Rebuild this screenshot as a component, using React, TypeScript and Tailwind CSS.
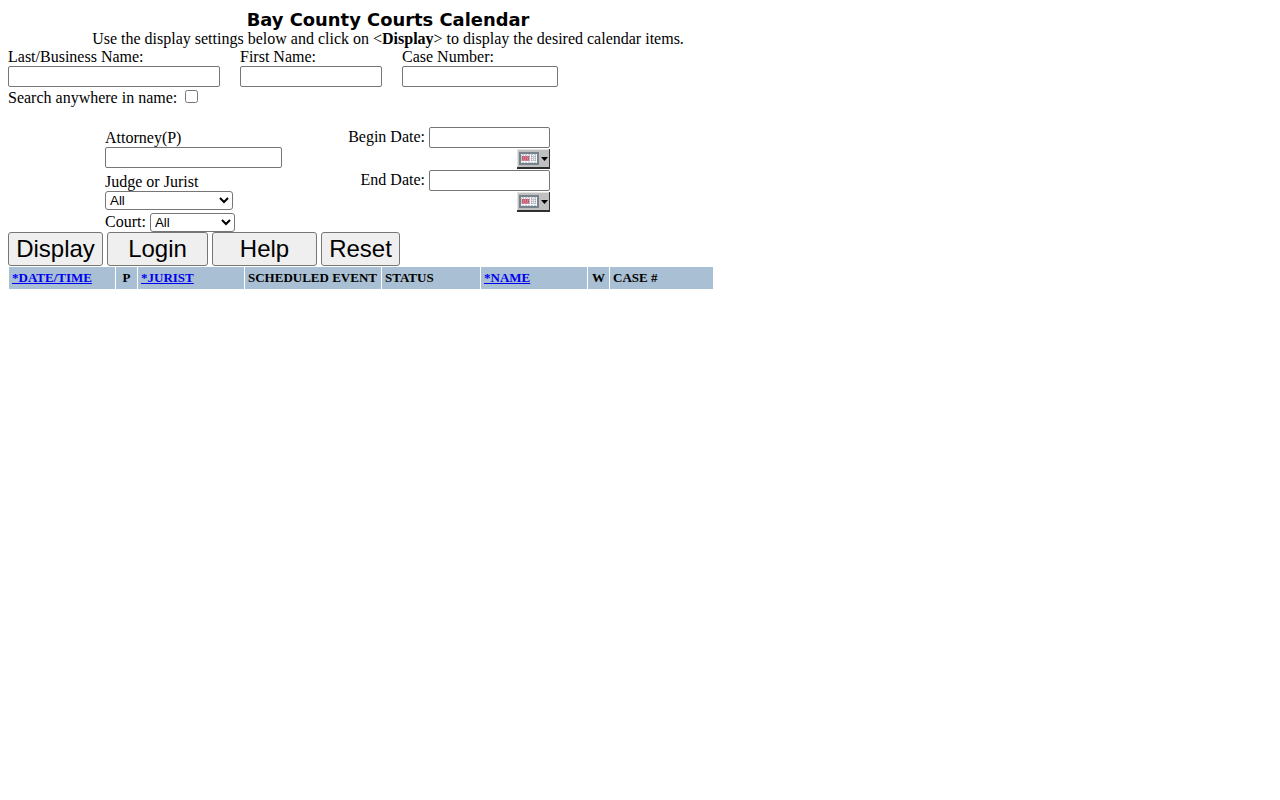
import React from 'react';

const serif = { fontFamily: '"Liberation Serif", serif' };

function CalendarButton() {
  return (
    <div className="ml-auto w-[33px] h-[20px]">
      <svg width="33" height="20" viewBox="0 0 33 20">
        <rect width="33" height="20" fill="#c0c0c0" />
        <path d="M0 0H33V1H1V20H0Z" fill="#e4e4e4" />
        <path d="M0 18H33V20H0ZM32 0H33V20H32Z" fill="#303030" />
        <rect x="2" y="3" width="20" height="13" fill="#77838a" />
        <rect x="4" y="5" width="16" height="9" fill="#f6f6f6" />
        <path d="M4 7H20M4 9H20M4 11H20M6 5V14M9 5V14M12 5V14M15 5V14M18 5V14" stroke="#8f98a8" strokeWidth="1" strokeDasharray="1 1" />
        <rect x="5" y="7" width="7" height="5" fill="#d9486a" opacity="0.55" />
        <path d="M5 8H12M5 10H12" stroke="#c0203c" strokeWidth="1" strokeDasharray="1 1" />
        <path d="M24 11H31L27.5 15Z" fill="#000000" transform="translate(0 -3)" />
      </svg>
    </div>
  );
}

const textInput = 'block h-[21px] border border-[#767676] rounded-[2px] bg-white';
const bigButton = 'h-[34px] border border-[#767676] rounded-[3px] bg-[#efefef] text-[24px] text-black text-center leading-none';
const smallSelect = 'h-[19px] border border-[#767676] rounded-[3px] bg-white text-[13.33px] text-black font-["Liberation_Sans",sans-serif]';

const columns = [
  { label: '*DATE/TIME', w: 'w-[106px]', link: true },
  { label: 'P', w: 'w-[21px]', center: true },
  { label: '*JURIST', w: 'w-[106px]', link: true },
  { label: 'SCHEDULED EVENT', w: 'w-[136px]' },
  { label: 'STATUS', w: 'w-[98px]' },
  { label: '*NAME', w: 'w-[106px]', link: true },
  { label: 'W', w: 'w-[21px]', center: true },
  { label: 'CASE #', w: 'w-[103px]' },
];

export default function App() {
  return (
    <div className="min-h-[800px] bg-white text-black p-2 pt-[9px] text-[16px] leading-[18px]" style={serif}>
      <div className="w-[760px] text-center">
        <h1 className="text-[17.9px] leading-[21px] font-bold" style={{ fontFamily: '"DejaVu Sans", sans-serif' }}>
          Bay County Courts Calendar
        </h1>
        <p className="leading-[18px]">
          Use the display settings below and click on &lt;<b>Display</b>&gt; to display the desired calendar items.
        </p>
      </div>

      <div className="flex gap-5">
        <label className="w-[212px]">
          Last/Business Name:
          <input type="text" className={`${textInput} w-full`} />
        </label>
        <label className="w-[142px]">
          First Name:
          <input type="text" className={`${textInput} w-full`} />
        </label>
        <label className="w-[156px]">
          Case Number:
          <input type="text" className={`${textInput} w-full`} />
        </label>
      </div>

      <div className="flex items-center h-[20px] mt-px">
        <span>Search anywhere in name:</span>
        <input type="checkbox" className="ml-2 w-[13px] h-[13px] -mt-[3px]" />
      </div>

      <div className="flex ml-[97px] mt-[19px] h-[105px]">
        <div className="w-[230px] shrink-0">
          <div className="mt-[2px]">Attorney(P)</div>
          <input type="text" className={`${textInput} w-[177px]`} />
          <div className="mt-[5px]">Judge or Jurist</div>
          <select className={`${smallSelect} block w-[128px]`}>
            <option>All</option>
          </select>
          <div className="flex items-center gap-1 mt-[3px]">
            <span className="-mt-[2px]">Court:</span>
            <select className={`${smallSelect} w-[85px]`}>
              <option>All</option>
            </select>
          </div>
        </div>
        <div className="w-[215px] shrink-0">
          <div className="flex justify-end gap-1 h-[22px]">
            <span className="mt-px">Begin Date:</span>
            <input type="text" className={`${textInput} w-[121px]`} />
          </div>
          <CalendarButton />
          <div className="flex justify-end gap-1 h-[22px] mt-px">
            <span className="mt-px">End Date:</span>
            <input type="text" className={`${textInput} w-[121px]`} />
          </div>
          <CalendarButton />
        </div>
      </div>

      <div className="flex gap-1" style={{ fontFamily: '"Liberation Sans", sans-serif' }}>
        <button className={`${bigButton} w-[95px]`}>Display</button>
        <button className={`${bigButton} w-[101px]`}>Login</button>
        <button className={`${bigButton} w-[105px]`}>Help</button>
        <button className={`${bigButton} w-[79px]`}>Reset</button>
      </div>

      <div className="flex gap-px ml-px mt-px">
        {columns.map(col => (
          <div
            key={col.label}
            className={`${col.w} h-[22px] bg-[#a9bfd3] px-[3px] text-[13px] leading-[21px] font-bold ${col.center ? 'text-center' : ''}`}
          >
            {col.link ? <a href="#" className="text-[#0000ee] underline">{col.label}</a> : col.label}
          </div>
        ))}
      </div>
    </div>
  );
}
